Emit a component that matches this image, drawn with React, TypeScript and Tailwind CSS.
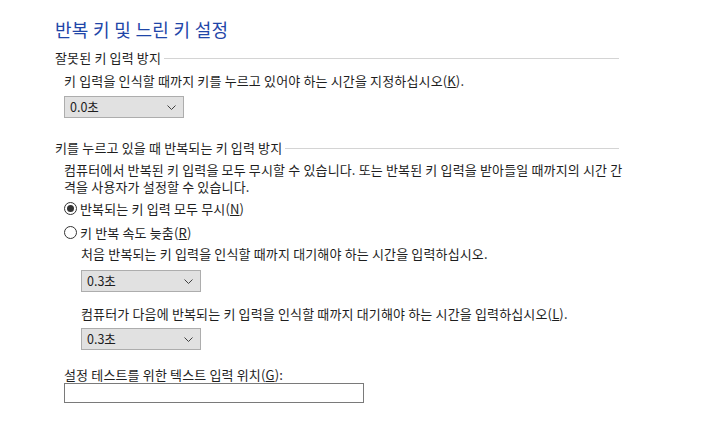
import React from 'react';

const font = "font-['Malgun_Gothic','Noto_Sans_CJK_KR',sans-serif]";

const Select = ({ value }: { value: string }) => (
  <div className="flex h-[22px] w-[120px] items-center justify-between border border-[#adadad] bg-[#e1e1e1] pl-[5px] pr-[7px] text-[12.5px] tracking-normal text-[#1e1e1e]">
    <span>{value}</span>
    <svg width="9" height="5" viewBox="0 0 9 5" className="text-[#404040]">
      <path d="M0.5 0.5 L4.5 4.5 L8.5 0.5" fill="none" stroke="currentColor" strokeWidth="1" />
    </svg>
  </div>
);

const GroupHeading = ({ text }: { text: string }) => (
  <div className="flex items-center gap-[3px] leading-[17px]">
    <span className="text-[#1e1e1e]">{text}</span>
    <div className="mt-[2px] h-px flex-1 bg-[#d4d4d4]" />
  </div>
);

const Radio = ({ checked, children }: { checked?: boolean; children: React.ReactNode }) => (
  <div className="flex items-center gap-[3px] leading-[17px]">
    <div className="flex h-[13px] w-[13px] items-center justify-center rounded-full border border-[#333333] bg-white">
      {checked && <div className="h-[7px] w-[7px] rounded-full bg-[#333333]" />}
    </div>
    <span>{children}</span>
  </div>
);

export default function App() {
  return (
    <div className={`min-h-[437px] w-[702px] bg-white ${font} text-[13px] tracking-[0.15px] text-[#1e1e1e]`}>
      <div className="flex w-[619px] flex-col pl-[55px] pt-[17px]">
        <h1 className="text-[18px] leading-[24px] tracking-[0.3px] text-[#1f46a8]">반복 키 및 느린 키 설정</h1>

        <div className="mt-[8px]">
          <GroupHeading text="잘못된 키 입력 방지" />
        </div>
        <div className="pl-[9px]">
          <p className="mt-[6px] leading-[17px]">
            키 입력을 인식할 때까지 키를 누르고 있어야 하는 시간을 지정하십시오(<span className="underline">K</span>).
          </p>
          <div className="mt-[7px]">
            <Select value="0.0초" />
          </div>
        </div>

        <div className="mt-[21px]">
          <GroupHeading text="키를 누르고 있을 때 반복되는 키 입력 방지" />
        </div>
        <div className="pl-[9px]">
          <p className="mt-[5px] w-[563px] leading-[17px]">
            컴퓨터에서 반복된 키 입력을 모두 무시할 수 있습니다. 또는 반복된 키 입력을 받아들일 때까지의 시간 간격을 사용자가 설정할 수 있습니다.
          </p>
          <div className="mt-[5px] flex flex-col gap-[7px]">
            <Radio checked>
              반복되는 키 입력 모두 무시(<span className="underline">N</span>)
            </Radio>
            <Radio>
              키 반복 속도 늦춤(<span className="underline">R</span>)
            </Radio>
          </div>
          <div className="pl-[17px]">
            <p className="mt-[4px] leading-[17px]">처음 반복되는 키 입력을 인식할 때까지 대기해야 하는 시간을 입력하십시오.</p>
            <div className="mt-[8px]">
              <Select value="0.3초" />
            </div>
            <p className="mt-[13px] leading-[17px]">
              컴퓨터가 다음에 반복되는 키 입력을 인식할 때까지 대기해야 하는 시간을 입력하십시오(<span className="underline">L</span>).
            </p>
            <div className="mt-[6px]">
              <Select value="0.3초" />
            </div>
          </div>
          <p className="mt-[16px] leading-[17px]">
            설정 테스트를 위한 텍스트 입력 위치(<span className="underline">G</span>):
          </p>
          <input className="block h-[20px] w-[300px] border border-[#7a7a7a] bg-white px-[3px] text-[12px] outline-none" />
        </div>
      </div>
    </div>
  );
}
